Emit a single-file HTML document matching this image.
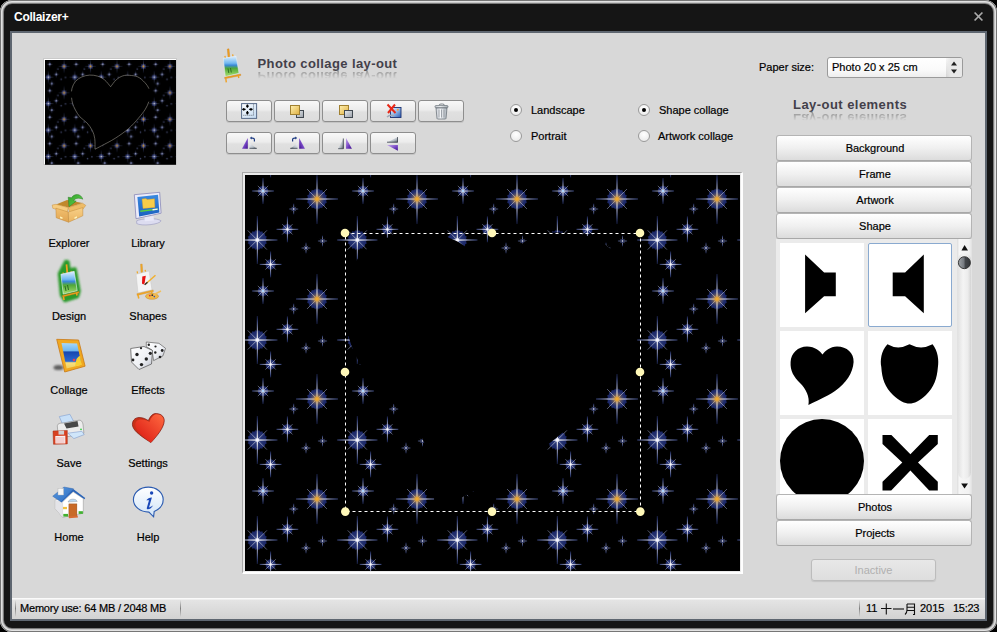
<!DOCTYPE html>
<html><head><meta charset="utf-8">
<style>
*{margin:0;padding:0;box-sizing:border-box}
html,body{width:997px;height:632px;overflow:hidden;background:#000;font-family:"Liberation Sans",sans-serif;font-size:11px;color:#000}
.lbl,.rl,.acc{-webkit-text-stroke:0.2px currentColor}
.abs{position:absolute}
svg{position:absolute;overflow:visible}
#win{position:absolute;left:0;top:0;width:997px;height:632px;border-radius:12px;background:#151515;box-shadow:inset 0 0 0 1px #767676,inset 0 0 0 2px #e2e2e2,inset 0 0 0 3px #c4c4c4,inset 0 0 0 4px #7a7a7a}
#title{position:absolute;left:14px;top:10px;color:#fff;font-weight:bold;font-size:12px;letter-spacing:-0.25px}
#content{position:absolute;left:10px;top:31px;width:977px;height:590px;background:#d8d8d8;border:2px solid #5e6670}
.btn{position:absolute;width:46px;height:22px;border:1px solid #8e8e8e;border-radius:3px;background:linear-gradient(#f8f8f8,#ececec 45%,#e0e0e0 55%,#dcdcdc);box-shadow:0 1px 0 #c4c4c4}
.lbl{position:absolute;width:80px;text-align:center;font-size:11px;color:#000;line-height:12px}
.acc{position:absolute;left:776px;width:196px;height:26px;border:1px solid #b4b4b4;border-bottom-color:#a8a8a8;border-radius:3px;background:linear-gradient(#ffffff,#f0f0f0 50%,#dcdcdc);text-align:center;line-height:24px;font-size:11px;color:#000;padding-left:2px}
.radio{position:absolute;width:12px;height:12px;border-radius:50%;border:1px solid #9a9a9a;background:radial-gradient(circle at 50% 35%,#fff,#e6e6e6)}
.radio.on::after{content:"";position:absolute;left:3px;top:3px;width:4px;height:4px;border-radius:50%;background:#000}
.rl{position:absolute;font-size:11px;color:#000;line-height:12px;white-space:nowrap}
.hd{position:absolute;font-size:13px;font-weight:bold;color:#43404a;line-height:15px;white-space:nowrap}
.rf{transform:scaleY(-1);transform-origin:0 13px;color:#707070;opacity:0.6;-webkit-mask-image:linear-gradient(to top,rgba(0,0,0,1) 15%,rgba(0,0,0,0) 65%)}
.cell{position:absolute;width:84px;height:84px;background:#fff}
</style></head><body>
<svg width="0" height="0" style="left:0;top:0">
  <defs>
    <radialGradient id="glow">
      <stop offset="0" stop-color="#40508c"/>
      <stop offset="0.45" stop-color="#263474"/>
      <stop offset="0.85" stop-color="#1c2868"/>
      <stop offset="1" stop-color="#18225c" stop-opacity="0.6"/>
    </radialGradient>
    <radialGradient id="rayg" gradientUnits="userSpaceOnUse" cx="0" cy="0" r="1">
      <stop offset="0" stop-color="#ffffff"/>
      <stop offset="0.15" stop-color="#e8e6ea"/>
      <stop offset="0.4" stop-color="#a8acc4"/>
      <stop offset="0.75" stop-color="#4c5c9c"/>
      <stop offset="1" stop-color="#304090" stop-opacity="0.5"/>
    </radialGradient>
    <radialGradient id="cg"><stop offset="0" stop-color="#f8b030"/><stop offset="0.45" stop-color="#e0a038"/><stop offset="1" stop-color="#b09060" stop-opacity="0"/></radialGradient>
    <radialGradient id="cgw"><stop offset="0" stop-color="#f0a830" stop-opacity="0.95"/><stop offset="0.45" stop-color="#c89040" stop-opacity="0.55"/><stop offset="1" stop-color="#806a60" stop-opacity="0"/></radialGradient>
    <radialGradient id="cb"><stop offset="0" stop-color="#60b8ff"/><stop offset="0.4" stop-color="#b0d8ff"/><stop offset="1" stop-color="#ffffff" stop-opacity="0"/></radialGradient>
    <radialGradient id="cw"><stop offset="0" stop-color="#fff"/><stop offset="0.5" stop-color="#f0f0ff"/><stop offset="1" stop-color="#e8ecff" stop-opacity="0"/></radialGradient>
    <g id="sb">
      <path d="M0.430,0.000 L0.364,0.064 L0.404,0.147 L0.320,0.185 L0.329,0.276 L0.238,0.283 L0.215,0.372 L0.127,0.348 L0.075,0.423 L0.000,0.370 L-0.075,0.423 L-0.127,0.348 L-0.215,0.372 L-0.238,0.283 L-0.329,0.276 L-0.320,0.185 L-0.404,0.147 L-0.364,0.064 L-0.430,0.000 L-0.364,-0.064 L-0.404,-0.147 L-0.320,-0.185 L-0.329,-0.276 L-0.238,-0.283 L-0.215,-0.372 L-0.127,-0.348 L-0.075,-0.423 L-0.000,-0.370 L0.075,-0.423 L0.127,-0.348 L0.215,-0.372 L0.238,-0.283 L0.329,-0.276 L0.320,-0.185 L0.404,-0.147 L0.364,-0.064Z" fill="url(#glow)"/>
      <path d="M0,-1 L0.02,0 0,1 -0.02,0Z M-0.84,0 L0,0.02 0.84,0 0,-0.02Z" fill="url(#rayg)"/>
      <path d="M0,-1 V1 M-0.84,0 H0.84" stroke="url(#rayg)" stroke-width="0.9" vector-effect="non-scaling-stroke"/>
      <path d="M-0.4,-0.4 L0.4,0.4 M-0.4,0.4 L0.4,-0.4" stroke="url(#rayg)" stroke-width="0.6" vector-effect="non-scaling-stroke"/>
    </g>
    <g id="st"><use href="#sb"/><circle r="0.1" fill="url(#cw)"/></g>
    <g id="sts" opacity="0.8"><use href="#sb" transform="scale(1.05)"/><circle r="0.42" fill="url(#glow)" opacity="0.7"/><circle r="0.22" fill="url(#cw)" opacity="0.8"/></g>
    <g id="stg"><use href="#sb"/><circle r="0.3" fill="url(#cgw)"/><circle r="0.14" fill="url(#cg)"/></g>
    <g id="stb"><use href="#sb"/><circle r="0.14" fill="url(#cb)"/></g>
    <pattern id="tile" patternUnits="userSpaceOnUse" x="0" y="0" width="100" height="100">
      <use href="#stb" transform="translate(18,16) scale(13)"/>
      <use href="#stg" transform="translate(72,24) scale(25)"/>
      <use href="#sts" transform="translate(48.7,34) scale(5.2)"/>
      <use href="#st" transform="translate(42.4,54.3) scale(13)"/>
      <use href="#st" transform="translate(12.3,65) scale(24)"/>
      <use href="#st" transform="translate(112.3,65) scale(24)"/>
      <use href="#sts" transform="translate(77.5,66) scale(5.2)"/>
      <use href="#sts" transform="translate(61,73) scale(5.2)"/>
      <use href="#st" transform="translate(25.6,89.4) scale(13)"/>
      <use href="#st" transform="translate(25.6,-10.6) scale(13)"/>
      <use href="#stg" transform="translate(72,124) scale(25)"/>
    </pattern>
    <path id="heart" d="M189.0,337.0 C188.8,330.3 189.7,308.7 188.0,297.0 C186.3,285.3 183.8,276.8 179.0,267.0 C174.2,257.2 166.8,246.7 159.0,238.0 C151.2,229.3 139.3,223.2 132.0,215.0 C124.7,206.8 119.7,197.7 115.0,189.0 C110.3,180.3 106.5,172.0 104.0,163.0 C101.5,154.0 100.3,144.3 100.0,135.0 C99.7,125.7 99.5,116.0 102.0,107.0 C104.5,98.0 108.8,88.2 115.0,81.0 C121.2,73.8 130.0,68.0 139.0,64.0 C148.0,60.0 159.0,57.5 169.0,57.0 C179.0,56.5 189.7,58.0 199.0,61.0 C208.3,64.0 216.8,68.3 225.0,75.0 C233.2,81.7 244.2,96.7 248.0,101.0 C251.5,96.7 261.3,81.8 269.0,75.0 C276.7,68.2 285.5,62.8 294.0,60.0 C302.5,57.2 310.5,57.3 320.0,58.0 C329.5,58.7 341.5,59.5 351.0,64.0 C360.5,68.5 370.0,77.5 377.0,85.0 C384.0,92.5 390.0,101.3 393.0,109.0 C396.0,116.7 395.0,123.3 395.0,131.0 C395.0,138.7 395.7,145.8 393.0,155.0 C390.3,164.2 385.7,175.2 379.0,186.0 C372.3,196.8 363.5,207.8 353.0,220.0 C342.5,232.2 330.7,246.3 316.0,259.0 C301.3,271.7 282.0,285.2 265.0,296.0 C248.0,306.8 226.7,317.2 214.0,324.0 C201.3,330.8 193.2,334.8 189.0,337.0Z"/>
  </defs>
</svg>
<div id="win"></div>
<div id="title">Collaizer+</div>
<svg style="left:974px;top:12px" width="9" height="9" viewBox="0 0 9 9"><path d="M0.6,0.5 L8.4,8.5 M8.4,0.5 L0.6,8.5" stroke="#aaaaaa" stroke-width="1.7"/></svg>
<div id="content"></div>

<!-- thumbnail -->
<div class="abs" style="left:43px;top:58px;width:134px;height:107px;background:#fff;border:1px solid #cacaca"></div>
<svg style="left:45px;top:60px" width="131" height="104" viewBox="0 0 131 104">
  <g transform="scale(0.26465)">
    <rect width="495" height="396" fill="#000"/>
    <rect width="495" height="396" fill="url(#tile)" opacity="0.85"/>
    <use href="#heart" fill="#000" stroke="#9a968c" stroke-width="2.2" stroke-dasharray="222 24 378 50 300"/>
  </g>
</svg>

<!-- canvas -->
<div class="abs" style="left:242px;top:172px;width:501px;height:402px;border-top:1px solid #a8a8a8;border-left:1px solid #a8a8a8;border-right:2px solid #fff;border-bottom:2px solid #fff;background:#eaeaea"></div>
<svg style="left:245px;top:175px" width="495" height="396" viewBox="0 0 495 396">
  <rect width="495" height="396" fill="#000"/>
  <rect width="495" height="396" fill="url(#tile)"/>
  <use href="#heart" fill="#000"/>
  <rect x="100.5" y="58.5" width="295" height="278" fill="none" stroke="#fff" stroke-dasharray="3 3"/>
  <g fill="#fff8b8">
    <circle cx="100" cy="58" r="4.3"/><circle cx="247" cy="58" r="4.3"/><circle cx="395" cy="58" r="4.3"/>
    <circle cx="100" cy="197" r="4.3"/><circle cx="395" cy="197" r="4.3"/>
    <circle cx="100.3" cy="336.6" r="4.3"/><circle cx="247" cy="336.6" r="4.3"/><circle cx="395.3" cy="336.6" r="4.3"/>
  </g>
</svg>


<!-- sidebar icons -->
<svg style="left:48px;top:188px" width="42" height="40" viewBox="0 0 42 40">
  <defs>
    <linearGradient id="bx1" x1="0" y1="0" x2="0" y2="1"><stop offset="0" stop-color="#f2c070"/><stop offset="1" stop-color="#e0a450"/></linearGradient>
    <linearGradient id="bx2" x1="0" y1="0" x2="0" y2="1"><stop offset="0" stop-color="#f8d088"/><stop offset="1" stop-color="#eab460"/></linearGradient>
    <linearGradient id="arw" x1="0" y1="0" x2="1" y2="1"><stop offset="0" stop-color="#30a028"/><stop offset="1" stop-color="#68d858"/></linearGradient>
  </defs>
  <path d="M8,16.5 L19,12 L34.5,15 L20.3,19.5 Z" fill="#c0882c"/>
  <path d="M34.8,11.2 C33,5.5 26.5,5 23.5,9.8 L20.2,9.2 L21,18.8 L28.2,13.2 L25.6,12.6 C27.2,10 31,9.4 34.8,11.2 Z" fill="url(#arw)" stroke="#2a7a22" stroke-width="0.5"/>
  <path d="M4.2,17 L8,16.3 L20.3,19.6 L19,24.5 L4.8,20.3 Z" fill="#f6cc80" stroke="#c89040" stroke-width="0.5"/>
  <path d="M20.3,19.6 L34.5,15.2 L37.8,17.4 L34.8,21.2 L21.6,25 Z" fill="#eebc68" stroke="#c89040" stroke-width="0.5"/>
  <path d="M7.9,20.2 L20.3,24 L20.6,34.2 L8.2,29.7 Z" fill="url(#bx1)" stroke="#c08838" stroke-width="0.5"/>
  <path d="M20.3,24 L34.8,19.6 L34.8,27.8 L20.6,34.2 Z" fill="url(#bx2)" stroke="#c08838" stroke-width="0.5"/>
  <path d="M12,28.5 L14.5,29.3 L14.5,31 L12,30.2Z" fill="#fff2b8"/><path d="M26.5,29.2 L29,28.2 L29,30 L26.5,31Z" fill="#fff2b8"/>
</svg>
<svg style="left:127px;top:186px" width="42" height="44" viewBox="0 0 42 44">
  <defs><linearGradient id="scr" x1="0" y1="0" x2="0" y2="1"><stop offset="0" stop-color="#3a8ae0"/><stop offset="1" stop-color="#1a60c0"/></linearGradient></defs>
  <path d="M9.7,34.8 C14,32.5 30,31.5 34.1,34.8 C33,38.5 14,40.5 9.7,37.5 Z" fill="#dcdcf0" stroke="#9898c0" stroke-width="0.6"/>
  <path d="M17.4,31 L26.5,30 L27,34.5 L17.8,35.2 Z" fill="#e8e8f8"/>
  <path d="M7.3,8.7 L32.7,6.3 L34.1,27.2 L9,32.7 Z" fill="#ececfa" stroke="#8888b8" stroke-width="0.8"/>
  <path d="M10.4,11.1 L31,8.7 L32.4,26.5 L12.2,30.6 Z" fill="url(#scr)"/>
  <path d="M15,13 L19,12.4 L20,13.5 L27.5,12.8 L27.9,21.4 L16,22.5 Z" fill="#f8cc48" stroke="#d8a020" stroke-width="0.4"/>
  <path d="M13.2,24.6 L30.6,22.4 L30.7,23.8 L13.4,26 Z" fill="#58d040"/>
  <path d="M25.5,22.9 L30.6,22.4 L30.7,23.8 L25.6,24.4 Z" fill="#f4f4f4"/>
</svg>
<svg style="left:48px;top:258px" width="42" height="48" viewBox="0 0 42 48">
  <defs><filter id="gb" x="-50%" y="-50%" width="200%" height="200%"><feGaussianBlur stdDeviation="1.3"/></filter>
  <linearGradient id="dsk" x1="0" y1="0" x2="0" y2="1"><stop offset="0" stop-color="#e0f0ff"/><stop offset="0.35" stop-color="#70b8f0"/><stop offset="0.45" stop-color="#3a88d8"/><stop offset="0.6" stop-color="#50a838"/><stop offset="1" stop-color="#a8e070"/></linearGradient></defs>
  <path d="M17.8,3.5 L20,4 L21,12 L27,11 L31,33 L29.5,38.5 L17,42.5 L13.5,37 L11.5,15.5 Z" fill="#2a9a2a" stroke="#2a9a2a" stroke-width="3.5" stroke-linejoin="round" filter="url(#gb)"/>
  <path d="M17.6,6.5 L19.4,6.3 L20.2,15 L18.4,15.2 Z" fill="#f0a020"/>
  <path d="M14.5,14.5 L15.5,14.3 L16,17 L15,17Z M22.5,13 L23.5,12.8 L24,15.5 L23,15.5Z" fill="#f0a020"/>
  <path d="M12.9,16.3 L26.2,13.3 L29.2,32.7 L15.2,36.1 Z" fill="url(#dsk)" stroke="#e8f0f8" stroke-width="0.6"/>
  <path d="M17,28 L18,33 M19.5,27 L20.5,32" stroke="#2a6a20" stroke-width="1"/>
  <path d="M14.4,37.4 L30.8,33.4 L31,35 L14.6,39 Z" fill="#f0a020" stroke="#c07010" stroke-width="0.4"/>
  <path d="M15.5,38.5 L16,42 M28.5,35 L29,37.5" stroke="#f0a020" stroke-width="1.6"/>
</svg>
<svg style="left:127px;top:258px" width="42" height="48" viewBox="0 0 42 48">
  <path d="M13.5,6.2 L15.2,6 L15.8,14.5 L14,14.7 Z" fill="#f0a828" stroke="#c88018" stroke-width="0.3"/>
  <path d="M9.5,13.5 L10.8,13.2 L11.2,15.5 L10,15.8Z M17.5,12 L18.8,11.8 L19.2,14 L18,14.2Z" fill="#f0a828"/>
  <path d="M9.1,16.3 L22,12.9 L25,31.9 L11,34.9 Z" fill="#f4f4f4" stroke="#c8c8c8" stroke-width="0.5"/>
  <path d="M15.3,18.5 L18.8,17.8 L17.6,25.2 L16.2,26.5 L15,25.5 Z" fill="#e81010"/>
  <path d="M18,26.5 L28.5,17.2" stroke="#f0b030" stroke-width="1.5"/>
  <path d="M17.6,26.8 L20.5,24.2" stroke="#303030" stroke-width="1.4"/>
  <path d="M9.9,35.7 L26.2,31.9 L26.4,33.6 L10.1,37.4 Z" fill="#f0a828" stroke="#c88018" stroke-width="0.3"/>
  <path d="M11,37 L11.8,40.5 M24.5,33 L25,36" stroke="#f0a828" stroke-width="1.5"/>
  <ellipse cx="25" cy="38.3" rx="6.5" ry="3" fill="#f0b848" stroke="#c88828" stroke-width="0.5"/>
  <circle cx="22.8" cy="37.6" r="0.9" fill="#e03030"/><circle cx="25.3" cy="37.2" r="0.9" fill="#303030"/><circle cx="27.3" cy="38.6" r="0.8" fill="#3050c0"/>
  <path d="M27,36.5 L34,33" stroke="#f0c060" stroke-width="1.4"/>
</svg>
<svg style="left:48px;top:332px" width="42" height="46" viewBox="0 0 42 46">
  <defs><linearGradient id="cpic" x1="0" y1="0" x2="0" y2="1"><stop offset="0" stop-color="#a8d8f8"/><stop offset="0.3" stop-color="#70b8f0"/><stop offset="0.36" stop-color="#1848b0"/><stop offset="0.72" stop-color="#2a68d0"/><stop offset="0.78" stop-color="#f8e080"/><stop offset="1" stop-color="#f0d060"/></linearGradient>
  <filter id="sh" x="-50%" y="-50%" width="200%" height="200%"><feGaussianBlur stdDeviation="1"/></filter></defs>
  <ellipse cx="10.5" cy="35.5" rx="5" ry="2.6" fill="#606060" filter="url(#sh)"/>
  <path d="M8.7,7.3 L30.6,8 L37.1,34.2 L16.7,40 Z" fill="#f0a820" stroke="#c87818" stroke-width="0.8" stroke-linejoin="round"/>
  <path d="M13.5,10.9 L29.1,11.6 L33.5,32.8 L18.6,36.4 Z" fill="url(#cpic)"/>
  <path d="M28.5,27 C30,25 31,24 32,24 L33.5,32.8 L27,34.3 Z" fill="#f8d030"/>
  <circle cx="26" cy="28" r="1.3" fill="#e84050"/>
</svg>
<svg style="left:127px;top:334px" width="42" height="42" viewBox="0 0 42 42">
  <defs><linearGradient id="dg" x1="0" y1="0" x2="1" y2="1"><stop offset="0" stop-color="#ffffff"/><stop offset="0.6" stop-color="#eef0f4"/><stop offset="1" stop-color="#b8bcc8"/></linearGradient></defs>
  <path d="M19.3,8 L31.9,9.3 L38.5,14.3 L35.9,21.9 L26.6,26.6 L25,16 L19.3,12.6 Z" fill="url(#dg)" stroke="#606060" stroke-width="0.7" stroke-linejoin="round"/>
  <circle cx="21.8" cy="10.8" r="1.2" fill="#222"/><circle cx="28.5" cy="12.5" r="1.1" fill="#222"/><circle cx="35.2" cy="16.5" r="1.4" fill="#222"/><circle cx="33" cy="23" r="1.3" fill="#222"/><circle cx="28.3" cy="18.5" r="1.2" fill="#222"/>
  <path d="M3.7,14.5 L17,12.5 L25.5,16.5 L24.5,30 L12,35.5 L4.5,28 Z" fill="url(#dg)" stroke="#505050" stroke-width="0.7" stroke-linejoin="round"/>
  <circle cx="10" cy="20.5" r="1.7" fill="#222"/><circle cx="23.3" cy="19.3" r="1.6" fill="#222"/><circle cx="19.3" cy="25" r="1.7" fill="#222"/><circle cx="14.5" cy="30.6" r="1.7" fill="#222"/><circle cx="6" cy="26" r="1.4" fill="#222"/><circle cx="14" cy="14.2" r="1.1" fill="#222"/>
</svg>
<svg style="left:48px;top:408px" width="42" height="42" viewBox="0 0 42 42">
  <path d="M11.3,8.6 L21.9,6.3 L25.6,13.3 L14.3,15.6 Z" fill="#c8e0f8" stroke="#7090c8" stroke-width="0.5"/>
  <path d="M9.3,17.8 C9.5,15.5 12,15 15,15 L31,12.2 C34,12 35,15 35.2,18 L35.9,25.2 L19.9,28.6 L10,26 Z" fill="#ececec" stroke="#8a8a8a" stroke-width="0.6"/>
  <path d="M16,15.5 L29.5,13 L30.5,18.5 L18.5,20.5 Z" fill="#484848"/>
  <circle cx="33" cy="21.3" r="0.9" fill="#30d040"/>
  <path d="M19.9,25.2 L33.9,23.3 L36.2,26.6 L25.9,30.6 Z" fill="#d0e6fa" stroke="#7090c8" stroke-width="0.5"/>
  <path d="M5,23 L19.3,22.4 L19.3,35.9 L5.5,36.3 Z" fill="#d84020" stroke="#a02810" stroke-width="0.5"/>
  <rect x="10.5" y="22.6" width="5.6" height="4" fill="#d0d0d0"/>
  <path d="M7.3,28 L17.3,27.8 L17.4,35.4 L7.4,35.6 Z" fill="#f8f0f0"/>
  <path d="M8,30 H16.5 M8,32 H16.5 M8,34 H16.5" stroke="#e07070" stroke-width="0.5"/>
</svg>
<svg style="left:127px;top:408px" width="42" height="42" viewBox="0 0 42 42">
  <defs><linearGradient id="hg" x1="1" y1="0" x2="0" y2="1"><stop offset="0" stop-color="#ff6a40"/><stop offset="1" stop-color="#d81410"/></linearGradient></defs>
  <path d="M23.9,34.6 C17,30 7,24 5.6,18 C4.5,13 8,9.5 12,9.5 C16,9.5 19,11 21.3,12.6 C23,9 25,6 28,5.6 C33,5.2 37.5,8 37.2,13 C37,19 31,27 23.9,34.6Z" fill="#c83018" stroke="#801810" stroke-width="0.7"/>
  <path d="M23.9,34.6 C18,30 10,24 8.5,18.5 C7.5,14 10.5,11.5 14,11.5 C17.5,11.5 20,12.5 22.5,14 C24,10 26.5,6.5 29,6.3 C33.5,6 37,9 36.7,13 C36.3,19 30.5,27 23.9,34.6Z" fill="url(#hg)"/>
</svg>
<svg style="left:48px;top:482px" width="42" height="42" viewBox="0 0 42 42">
  <defs><linearGradient id="rf" x1="0" y1="0" x2="1" y2="1"><stop offset="0" stop-color="#5a9ae0"/><stop offset="1" stop-color="#2a6ac0"/></linearGradient></defs>
  <path d="M7.3,18 L25.2,9.5 L35.2,16.6 L35.2,31.2 L14.6,35.2 L7.3,26.6 Z" fill="#f8f8f8" stroke="#909090" stroke-width="0.5"/>
  <path d="M14.6,20 L25.2,10 L35.2,16.6 L35.2,31.2 L14.6,35.2 Z" fill="#ffffff" stroke="#a0a0a0" stroke-width="0.4"/>
  <path d="M7.3,18 L14.6,20 L14.6,35.2 L7.3,26.6Z" fill="#e4e4e8"/>
  <path d="M4.7,14.2 L16,5 L25.5,6.8 L13.5,20.2 Z" fill="url(#rf)" stroke="#2a5aa0" stroke-width="0.4"/>
  <path d="M25.2,7 L37.2,16 L36.5,17.2 L25.2,9.5 L13.5,20.2 L13.2,19.5Z" fill="#2a64b8"/>
  <rect x="10" y="6.3" width="5.6" height="6.7" fill="#f4f4f4" stroke="#b0b0b0" stroke-width="0.4"/>
  <path d="M20,20 C21,16.5 28,16 29.2,19.5 Z" fill="#b8d8f4" stroke="#909090" stroke-width="0.4"/>
  <rect x="20.9" y="21.9" width="8" height="12.7" fill="#c86a28" stroke="#8a4a18" stroke-width="0.4"/>
  <rect x="15" y="24.9" width="4" height="2.3" fill="#f0c040"/>
  <rect x="15.3" y="31.9" width="4.7" height="2.7" fill="#40b030"/><rect x="30.6" y="29.2" width="4.3" height="2.7" fill="#40b030"/>
  <path d="M20.5,34.6 L29.5,33.5 L30,35.5 L21,36.3Z" fill="#d86a30"/>
</svg>
<svg style="left:127px;top:482px" width="42" height="42" viewBox="0 0 42 42">
  <defs><linearGradient id="bub" x1="0" y1="0" x2="0" y2="1"><stop offset="0" stop-color="#ffffff"/><stop offset="1" stop-color="#d0e4f8"/></linearGradient></defs>
  <path d="M21.3,5.1 C29.5,5.1 36.2,10.6 36.2,17.6 C36.2,23.5 32,27.5 27.2,29.4 L26.6,34.9 L21.9,30.1 C13,30.1 6.4,24.5 6.4,17.6 C6.4,10.6 13,5.1 21.3,5.1 Z" fill="url(#bub)" stroke="#2a5ab0" stroke-width="1.1"/>
  <circle cx="24.6" cy="11" r="1.7" fill="#1a48b8"/>
  <path d="M19.3,18.2 C20.5,16.5 23,15.3 24.9,15.5 L22,25.5 C23.5,25 25,24 26.2,23.2 C25,25.5 22.5,27.5 20.5,27.3 C19.5,27.2 19.8,26 20,25.3 L22,18.3 C21,18.3 20,18.4 19.3,18.2Z" fill="#1a48b8"/>
</svg>
<div class="lbl" style="left:29px;top:237px">Explorer</div>
<div class="lbl" style="left:108px;top:237px">Library</div>
<div class="lbl" style="left:29px;top:310px">Design</div>
<div class="lbl" style="left:108px;top:310px">Shapes</div>
<div class="lbl" style="left:29px;top:384px">Collage</div>
<div class="lbl" style="left:108px;top:384px">Effects</div>
<div class="lbl" style="left:29px;top:457px">Save</div>
<div class="lbl" style="left:108px;top:457px">Settings</div>
<div class="lbl" style="left:29px;top:531px">Home</div>
<div class="lbl" style="left:108px;top:531px">Help</div>


<!-- header -->
<svg style="left:216px;top:44px" width="30" height="42" viewBox="0 0 30 42">
  <path d="M11.3,5 L13,4.8 L13.8,13 L12,13.2 Z" fill="#f0a020" stroke="#c07010" stroke-width="0.3"/>
  <path d="M8.3,12 L9.5,11.8 L10,14 L8.8,14.2Z M16,10.5 L17.2,10.3 L17.7,12.5 L16.5,12.7Z" fill="#f0a020"/>
  <path d="M7.3,14.3 L20,12 L23,29.3 L9.3,32.6 Z" fill="url(#dsk)" stroke="#e8f0f8" stroke-width="0.5"/>
  <path d="M12,24.5 L12.8,29 M14.5,24 L15.3,28.5" stroke="#2a6a20" stroke-width="0.9"/>
  <path d="M8.6,33.3 L24.6,30 L24.8,31.5 L8.8,34.8 Z" fill="#f0a020" stroke="#c07010" stroke-width="0.3"/>
  <path d="M9.8,34.5 L10.3,38.3 M22.3,31.5 L22.8,34" stroke="#f0a020" stroke-width="1.4"/>
</svg>
<div class="hd" style="left:257.5px;top:56px;letter-spacing:0.4px">Photo collage lay-out</div>
<div class="hd rf" style="left:257.5px;top:58px;letter-spacing:0.4px">Photo collage lay-out</div>

<!-- toolbar -->
<div class="btn" style="left:226px;top:100px"></div>
<div class="btn" style="left:274px;top:100px"></div>
<div class="btn" style="left:322px;top:100px"></div>
<div class="btn" style="left:370px;top:100px"></div>
<div class="btn" style="left:418px;top:100px"></div>
<div class="btn" style="left:226px;top:132px"></div>
<div class="btn" style="left:274px;top:132px"></div>
<div class="btn" style="left:322px;top:132px"></div>
<div class="btn" style="left:370px;top:132px"></div>
<svg style="left:238px;top:100px" width="22" height="22" viewBox="0 0 22 22">
  <defs><linearGradient id="mq" x1="0" y1="0" x2="1" y2="1"><stop offset="0" stop-color="#ffffff"/><stop offset="1" stop-color="#c0d8f0"/></linearGradient>
  <linearGradient id="pu" x1="0" y1="0" x2="1" y2="1"><stop offset="0" stop-color="#c8a8f0"/><stop offset="0.6" stop-color="#7040c0"/><stop offset="1" stop-color="#40108a"/></linearGradient>
  <linearGradient id="gy" x1="0" y1="0" x2="1" y2="1"><stop offset="0" stop-color="#f8f8fc"/><stop offset="0.6" stop-color="#b8c0c8"/><stop offset="1" stop-color="#505860"/></linearGradient></defs>
  <rect x="3.6" y="3.6" width="15" height="14.8" fill="url(#mq)" stroke="#586a88" stroke-width="1"/>
  <path d="M15.5,4.5 V15.3 H4.5" fill="none" stroke="#505860" stroke-width="0.9" stroke-dasharray="0.9 1.1"/>
  <g stroke="#000" stroke-width="1.3">
    <path d="M9.4,4.6 V7.8 M9.4,11 V14.4 M4.2,9.4 H7.6 M11.2,9.4 H14.6"/>
    <path d="M8,6.2 H10.8 M8,12.8 H10.8 M5.8,8 V10.8 M13,8 V10.8" stroke-width="1.2"/>
  </g>
</svg>
<svg style="left:290px;top:105px" width="15" height="14" viewBox="0 0 15 14">
  <defs><linearGradient id="yq" x1="0" y1="0" x2="1" y2="1"><stop offset="0" stop-color="#fff0b0"/><stop offset="1" stop-color="#e0b040"/></linearGradient>
  <linearGradient id="gq" x1="0" y1="0" x2="1" y2="1"><stop offset="0" stop-color="#e8ecf0"/><stop offset="1" stop-color="#9aa0a8"/></linearGradient></defs>
  <rect x="6.5" y="5.5" width="7" height="7" fill="url(#gq)" stroke="#404850"/>
  <rect x="0.5" y="0.5" width="9" height="9" fill="url(#yq)" stroke="#a08030"/>
</svg>
<svg style="left:339px;top:105px" width="15" height="14" viewBox="0 0 15 14">
  <rect x="0.5" y="0.5" width="9" height="9" fill="url(#yq)" stroke="#a08030"/>
  <rect x="5.5" y="5.5" width="8" height="7" fill="url(#gq)" stroke="#404850"/>
</svg>
<svg style="left:385px;top:103px" width="18" height="16" viewBox="0 0 18 16">
  <defs><linearGradient id="pq" x1="0" y1="0" x2="1" y2="1"><stop offset="0" stop-color="#f0f6ff"/><stop offset="0.5" stop-color="#90b8e8"/><stop offset="1" stop-color="#2a58b0"/></linearGradient></defs>
  <rect x="5.5" y="4.5" width="10.5" height="10" fill="url(#pq)" stroke="#1a3070" stroke-width="0.9"/>
  <circle cx="12.8" cy="6.8" r="1" fill="#f0a040"/>
  <path d="M2,14 C4,12 6,11.5 9,13" stroke="#a0a8b8" stroke-width="1.4" fill="none"/>
  <path d="M2.5,1.5 L10.5,10 M10,1.5 L3,10" stroke="#e82818" stroke-width="2"/>
</svg>
<svg style="left:434px;top:103px" width="15" height="17" viewBox="0 0 15 17">
  <defs><linearGradient id="tq" x1="0" y1="0" x2="1" y2="0"><stop offset="0" stop-color="#c8ccd4"/><stop offset="0.4" stop-color="#f4f6f8"/><stop offset="1" stop-color="#a8b0b8"/></linearGradient></defs>
  <path d="M5,2.5 Q5,1 7,1 H8.5 Q10.5,1 10.5,2.5" fill="none" stroke="#606870" stroke-width="0.8"/>
  <rect x="1" y="2.6" width="13" height="2.2" rx="1" fill="url(#tq)" stroke="#606870" stroke-width="0.7"/>
  <path d="M2,5 L3,15.5 Q3.2,16 4,16 H11 Q11.8,16 12,15.5 L13,5 Z" fill="url(#tq)" stroke="#606870" stroke-width="0.7"/>
  <path d="M5,6.5 V14.5 M7.5,6.5 V14.5 M10,6.5 V14.5" stroke="#8a9098" stroke-width="0.8"/>
</svg>
<svg style="left:238px;top:132px" width="24" height="22" viewBox="0 0 24 22">
  <path d="M4,16.7 L9.8,6.1 L9.8,16.7 Z" fill="url(#pu)"/>
  <path d="M11.5,11.1 L11.5,16.7 L18.8,16.7 Z" fill="url(#gy)"/>
  <path d="M11.5,16.3 H18.8" stroke="#404850" stroke-width="0.8"/>
  <path d="M16.4,9.4 V7.6 Q16.4,6.1 14.6,6.1 H13.4" fill="none" stroke="#1a3880" stroke-width="1.2"/>
  <path d="M11.8,6.1 L13.8,4.6 L13.8,7.6 Z" fill="#1a3880"/>
</svg>
<svg style="left:286px;top:132px" width="24" height="22" viewBox="0 0 24 22">
  <g transform="translate(23,0) scale(-1,1)">
  <path d="M4,16.7 L9.8,6.1 L9.8,16.7 Z" fill="url(#pu)"/>
  <path d="M11.5,11.1 L11.5,16.7 L18.8,16.7 Z" fill="url(#gy)"/>
  <path d="M11.5,16.3 H18.8" stroke="#404850" stroke-width="0.8"/>
  <path d="M16.4,9.4 V7.6 Q16.4,6.1 14.6,6.1 H13.4" fill="none" stroke="#1a3880" stroke-width="1.2"/>
  <path d="M11.8,6.1 L13.8,4.6 L13.8,7.6 Z" fill="#1a3880"/>
  </g>
</svg>
<svg style="left:334px;top:132px" width="24" height="22" viewBox="0 0 24 22">
  <path d="M4.2,16.7 L9.8,6.1 L9.8,16.7 Z" fill="url(#gy)"/>
  <path d="M9.3,6.5 V16.7 H4.2" fill="none" stroke="#404850" stroke-width="0.8"/>
  <path d="M12,6.1 L12,16.7 L17.9,16.7 Z" fill="url(#pu)"/>
</svg>
<svg style="left:382px;top:132px" width="24" height="22" viewBox="0 0 24 22">
  <path d="M5,10.6 L15.9,5.1 L15.9,10.6 Z" fill="url(#gy)"/>
  <path d="M5,10.2 H15.5 V5.1" fill="none" stroke="#404850" stroke-width="0.8"/>
  <path d="M5,13.1 L15.9,13.1 L15.9,18.8 Z" fill="url(#pu)"/>
</svg>

<!-- radios -->
<div class="radio on" style="left:510px;top:104px"></div>
<div class="rl" style="left:531px;top:104px">Landscape</div>
<div class="radio" style="left:510px;top:130px"></div>
<div class="rl" style="left:531px;top:130px">Portrait</div>
<div class="radio on" style="left:638px;top:104px"></div>
<div class="rl" style="left:659px;top:104px">Shape collage</div>
<div class="radio" style="left:638px;top:130px"></div>
<div class="rl" style="left:658px;top:130px">Artwork collage</div>


<!-- paper size -->
<div class="rl" style="left:759px;top:61px">Paper size:</div>
<div class="abs" style="left:827px;top:57px;width:136px;height:21px;border:1px solid #9a9a9a;border-radius:3px;background:linear-gradient(#ffffff,#fafafa 60%,#eeeeee)"></div>
<div class="abs" style="left:946px;top:58px;width:16px;height:19px;background:linear-gradient(90deg,rgba(255,255,255,0),#e8e8e8 30%),linear-gradient(#f8f8f8,#d4d4d4);border-radius:0 2px 2px 0"></div>
<svg style="left:950px;top:61px" width="8" height="13" viewBox="0 0 8 13"><path d="M4,0.5 L7,4.5 H1Z M4,12.5 L7,8.5 H1Z" fill="#202020"/></svg>
<div class="rl" style="left:832px;top:61px">Photo 20 x 25 cm</div>

<div class="hd" style="left:793px;top:97px;letter-spacing:0.45px">Lay-out elements</div>
<div class="hd rf" style="left:793px;top:99.5px;letter-spacing:0.45px">Lay-out elements</div>

<!-- accordion -->
<div class="acc" style="top:135px">Background</div>
<div class="acc" style="top:161px">Frame</div>
<div class="acc" style="top:187px">Artwork</div>
<div class="acc" style="top:213px">Shape</div>
<div class="abs" style="left:776px;top:239px;width:196px;height:255px;background:#ebebeb;overflow:hidden">
  <div class="cell" style="left:4px;top:4px"><svg style="left:0;top:0" width="84" height="84" viewBox="0 0 84 84"><path d="M25.1,11.4 L44.1,29.5 L55.8,29.5 L55.8,53.2 L44.1,53.2 L25.1,70.2 Z" fill="#000"/></svg></div>
  <div class="cell" style="left:92px;top:4px;border:1px solid #8aaad0;border-radius:2px"><svg style="left:-1px;top:-1px" width="84" height="84" viewBox="0 0 84 84"><path d="M55.8,11.4 L37.1,29.5 L24.7,29.5 L24.7,53.2 L37.1,53.2 L55.8,70.2 Z" fill="#000"/></svg></div>
  <div class="cell" style="left:4px;top:92px"><svg style="left:0;top:0" width="84" height="84" viewBox="0 0 84 84"><path d="M28.4,74 C30,66 26,58 20,52 C14,46 10,40 10.6,31 C11,22 18,15.4 27,15.4 C35,15.4 40,20 42.5,23.4 C45,20 50,15.4 57,15.4 C67,15.4 74,22 73.6,31 C73,42 66,52 55,60 C46,66 36,70 28.4,74Z" fill="#000"/></svg></div>
  <div class="cell" style="left:92px;top:92px"><svg style="left:0;top:0" width="84" height="84" viewBox="0 0 84 84"><path d="M19.4,13.3 Q30,19.5 41.5,13.3 Q53,19.5 64.6,13.3 C70,20 71,30 69.9,36 C69,48 66,56 58,64 C52,70 46,72.6 41.5,72.6 C37,72.6 31,70 25,64 C17,56 14,48 13.3,36 C12,30 13,20 19.4,13.3Z" fill="#000"/></svg></div>
  <div class="cell" style="left:4px;top:180px"><svg style="left:0;top:0" width="84" height="84" viewBox="0 0 84 84"><circle cx="42" cy="42" r="42" fill="#000"/></svg></div>
  <div class="cell" style="left:92px;top:180px"><svg style="left:0;top:0" width="84" height="84" viewBox="0 0 84 84"><path d="M14.5,16 L23.4,16 L42.4,35.3 L61.2,16 L69.8,16 L69.8,25 L50,43.4 L69.8,62.7 L69.8,71.4 L61.2,71.4 L42.4,51.5 L23.2,71.4 L14.5,71.4 L14.5,62.7 L34.3,43.4 L14.5,25 Z" fill="#000"/></svg></div>
  <!-- scrollbar -->
  <div class="abs" style="left:181px;top:0;width:15px;height:255px;background:linear-gradient(90deg,#dcdcdc,#f6f6f6 15%,#f2f2f2 80%,#e0e0e0)"></div>
  <div class="abs" style="left:182px;top:14px;width:13px;height:226px;border-radius:6.5px;background:linear-gradient(90deg,#e2e2e2,#f4f4f4 40%,#ececec 75%,#d4d4d4)"></div>
  <svg style="left:181px;top:0" width="15" height="255" viewBox="0 0 15 255">
    <defs><linearGradient id="thg" x1="0" x2="1"><stop offset="0" stop-color="#a0a4a8"/><stop offset="0.5" stop-color="#70747a"/><stop offset="0.52" stop-color="#45484c"/><stop offset="1" stop-color="#34363a"/></linearGradient></defs>
    <path d="M7.6,6 L11,11.5 H4.5Z" fill="#111"/>
    <circle cx="7.4" cy="23.7" r="6" fill="url(#thg)" stroke="#2a2a2a" stroke-width="0.9"/>
    <path d="M4.2,244.5 H11 L7.5,249.5Z" fill="#111"/>
  </svg>
</div>
<div class="acc" style="top:494px">Photos</div>
<div class="acc" style="top:520px">Projects</div>
<div class="abs" style="left:811px;top:559px;width:125px;height:22px;border:1px solid #bcbcbc;border-radius:3px;background:linear-gradient(#e8e8e8,#dedede);box-shadow:0 1px 1px #c4c4c4;text-align:center;line-height:20px;color:#b0b0b0;font-size:11px">Inactive</div>


<!-- status bar -->
<div class="abs" style="left:12px;top:598px;width:973px;height:21px;background:linear-gradient(#fafafa 0,#fafafa 1px,#e4e4e4 2px,#d2d2d2)"></div>
<div class="abs" style="left:15px;top:600px;width:1px;height:17px;background:linear-gradient(rgba(128,128,128,0),#808080 50%,rgba(128,128,128,0))"></div>
<div class="abs" style="left:180px;top:600px;width:1px;height:17px;background:linear-gradient(rgba(128,128,128,0),#808080 50%,rgba(128,128,128,0))"></div>
<div class="abs" style="left:859px;top:600px;width:1px;height:17px;background:linear-gradient(rgba(128,128,128,0),#808080 50%,rgba(128,128,128,0))"></div>
<div class="abs" style="left:20px;top:602px;font-size:11px;color:#000;letter-spacing:-0.2px;-webkit-text-stroke:0.2px #000">Memory use: 64 MB / 2048 MB</div>
<div class="abs" style="left:866px;top:602px;font-size:11px;color:#000;-webkit-text-stroke:0.2px #000">11</div>
<svg style="left:880px;top:603px" width="36" height="12" viewBox="0 0 36 12">
  <g stroke="#101010" stroke-width="1.1" fill="none">
    <path d="M1,5.5 H11.5 M6.3,0.5 V11.5"/>
    <path d="M13,6 H24"/>
    <path d="M27,1 V7 Q27,10 25,11.5 M27,1 H34.5 V11.5 H33 M27,4.3 H34.5 M27,7.5 H34.5"/>
  </g>
</svg>
<div class="abs" style="left:920px;top:602px;font-size:11px;color:#000;-webkit-text-stroke:0.2px #000">2015</div>
<div class="abs" style="left:953px;top:602px;font-size:11px;color:#000;letter-spacing:-0.3px;-webkit-text-stroke:0.2px #000">15:23</div>

</body></html>
